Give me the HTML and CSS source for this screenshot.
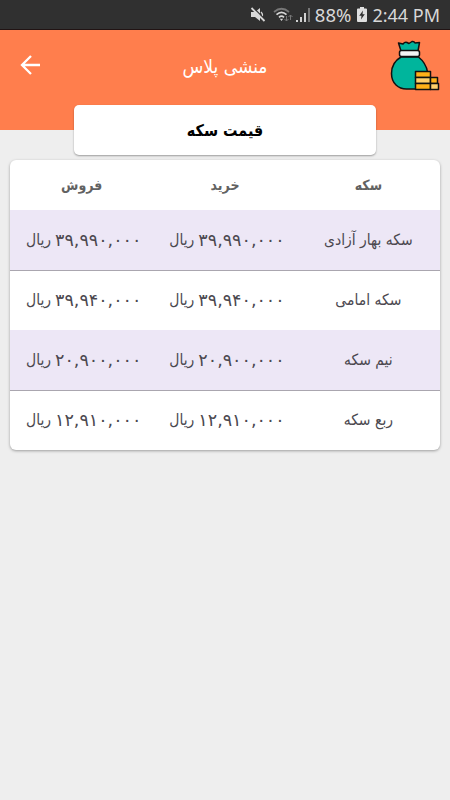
FILE: index.html
```html
<!DOCTYPE html>
<html lang="fa" dir="rtl">
<head>
  <meta charset="UTF-8">
  <meta name="viewport" content="width=device-width, initial-scale=1.0">
  <title>منشی پلاس</title>
  <link rel="stylesheet" href="styles.css">
</head>
<body>
  <div class="status-bar" dir="ltr">
    <svg class="icon-mute" width="16" height="16" viewBox="0 0 16 16">
      <path d="M1 5h4l5-4v13l-5-4H1z" fill="#d8d8d8"/>
      <path d="M11 5q3 3 0 6" fill="none" stroke="#d8d8d8" stroke-width="1.3"/>
      <path d="M3 .500l13 13" stroke="#303030" stroke-width="1.500"/>
      <path d="M1.500 1l13 13" stroke="#d8d8d8" stroke-width="1.8"/>
    </svg>
    <svg class="icon-wifi" width="20" height="16" viewBox="0 0 20 16">
      <g fill="none" stroke-width="1.7">
        <path d="M1 5Q8.500-1.500 16 5" stroke="#777"/>
        <path d="M3.500 7.700Q8.500 3.200 13.500 7.700M6 10.300Q8.500 8 11 10.300" stroke="#d8d8d8"/>
      </g>
      <path d="M6.800 11.800h3.400L8.500 14z" fill="#d8d8d8"/>
      <path d="M13.500 9v5m-2-2l2 2 2-2M17.500 13V8m-2 2l2-2 2 2" fill="none" stroke="#777"/>
    </svg>
    <svg class="icon-signal" width="16" height="16" viewBox="0 0 16 16">
      <path d="M1 13h2v2H1zM5 10h2v5H5zM9 6h2v9H9z" fill="#d0d0d0"/>
      <path d="M13 1h2v14h-2z" fill="#777"/>
    </svg>
    <span class="battery-text">88%</span>
    <svg class="icon-battery" width="10" height="15" viewBox="0 0 10 15">
      <path d="M3 0h4v1.500h2q1 0 1 1V14q0 1-1 1H1q-1 0-1-1V2.500q0-1 1-1h2z" fill="#e0e0e0"/>
      <path d="M6 3.500L2.200 8.800h2.300L4 12.500l3.800-5.300H5.500z" fill="#303030"/>
    </svg>
    <span class="clock">2:44 PM</span>
  </div>

  <header class="app-bar" dir="ltr">
    <svg class="back" width="20" height="20" viewBox="0 0 20 20">
      <path d="M20 10H2M11 1l-9 9 9 9" fill="none" stroke="#fff" stroke-width="2.300"/>
    </svg>
    <h1 class="app-title">منشی پلاس</h1>
    <svg class="logo" width="50" height="51" viewBox="0 0 50 51" stroke="#111" stroke-width="1.500" stroke-linejoin="round" stroke-linecap="round">
      <path d="M11 17C4 21 1.500 27 1.500 33.500c0 10 7 15.500 15 15.500h10c8-1 12-8 11-17-1-6-4-11-9-15z" fill="#00b59c"/>
      <path d="M11 11L8.500 3l4.500 1q2-2.500 4-1.500l2 1 3-2q2-.500 3 1.500l4.500-.500L28 11z" fill="#00b59c"/>
      <rect x="9.500" y="10.500" width="20" height="6" rx="2" fill="#f3f4f4"/>
      <rect x="25.500" y="31.500" width="15" height="6" fill="#ffb018"/>
      <rect x="25.500" y="37.500" width="15" height="6" fill="#ffd06b"/>
      <rect x="40.500" y="37.500" width="7" height="6" fill="#ffb018"/>
      <rect x="25.500" y="43.500" width="15" height="6" fill="#ffb018"/>
      <rect x="40.500" y="43.500" width="8" height="6" fill="#ffd06b"/>
    </svg>
  </header>

  <main class="content">
    <h2 class="page-title"><span>قیمت سکه</span></h2>

    <div class="prices">
      <div class="row head">
        <div class="cell"><span>سکه</span></div>
        <div class="cell"><span>خرید</span></div>
        <div class="cell"><span>فروش</span></div>
      </div>
      <div class="row tinted">
        <div class="cell"><span>سکه بهار آزادی</span></div>
        <div class="cell price"><span class="num">۳۹,۹۹۰,۰۰۰</span><span>ریال</span></div>
        <div class="cell price"><span class="num">۳۹,۹۹۰,۰۰۰</span><span>ریال</span></div>
      </div>
      <div class="row">
        <div class="cell"><span>سکه امامی</span></div>
        <div class="cell price"><span class="num">۳۹,۹۴۰,۰۰۰</span><span>ریال</span></div>
        <div class="cell price"><span class="num">۳۹,۹۴۰,۰۰۰</span><span>ریال</span></div>
      </div>
      <div class="row tinted">
        <div class="cell"><span>نیم سکه</span></div>
        <div class="cell price"><span class="num">۲۰,۹۰۰,۰۰۰</span><span>ریال</span></div>
        <div class="cell price"><span class="num">۲۰,۹۰۰,۰۰۰</span><span>ریال</span></div>
      </div>
      <div class="row">
        <div class="cell"><span>ربع سکه</span></div>
        <div class="cell price"><span class="num">۱۲,۹۱۰,۰۰۰</span><span>ریال</span></div>
        <div class="cell price"><span class="num">۱۲,۹۱۰,۰۰۰</span><span>ریال</span></div>
      </div>
    </div>
  </main>
</body>
</html>
```
FILE: styles.css
```css
* {
  box-sizing: border-box;
}

body {
  margin: 0;
  height: 100vh;
  overflow: hidden;
  background: #eee;
  font-family: "DejaVu Sans Condensed", "DejaVu Sans", sans-serif;
  color: #4b484f;
}

.status-bar {
  display: flex;
  align-items: center;
  justify-content: flex-end;
  height: 30px;
  padding-right: 10px;
  background: #303030;
  border-bottom: 1px solid #211313;
  color: #d8d8d8;
  font-family: "Noto Sans", sans-serif;
  font-size: 18px;
}

.battery-text {
  font-size: 18.5px;
}

.icon-mute {
  margin-right: 7px;
}

.icon-wifi {
  margin-right: 2px;
}

.icon-signal {
  margin-right: 4px;
}

.icon-battery {
  margin: 0 5px 0 6px;
}

.app-bar {
  display: flex;
  justify-content: space-between;
  height: 100px;
  padding: 10px 10px 0 20px;
  background: #ff7e4d;
}

.back {
  margin: 15px 20px 0 0;
}

.app-title {
  margin: 15px 0 0;
  color: #fff;
  font-size: 19px;
  font-weight: normal;
  line-height: 22px;
}

.content {
  padding: 0 10px;
}

.page-title {
  position: relative;
  display: flex;
  align-items: center;
  justify-content: center;
  width: 302px;
  height: 50px;
  margin: -25px auto 5px;
  border-radius: 5px;
  background: #fff;
  box-shadow: 0 1px 2px rgba(0, 0, 0, 0.35);
  color: #000;
  font-size: 16px;
}

.prices {
  border-radius: 6px;
  overflow: hidden;
  background: #fff;
  box-shadow: 0 1px 3px rgba(0, 0, 0, 0.35);
}

.row {
  display: grid;
  grid-template-columns: repeat(3, 1fr);
  height: 60px;
  font-size: 15.5px;
}

.head {
  height: 50px;
  color: #626262;
  font-size: 14px;
  font-weight: bold;
}

.tinted {
  height: 61px;
  margin-bottom: -1px;
  background: #ede7f6;
  border-bottom: 1px solid #aaa6af;
}

.cell {
  display: flex;
  align-items: center;
  justify-content: center;
}

.price {
  gap: 4px;
  padding-left: 4px;
}

.num {
  font-family: "DejaVu Sans", sans-serif;
  font-size: 17.5px;
}
```
